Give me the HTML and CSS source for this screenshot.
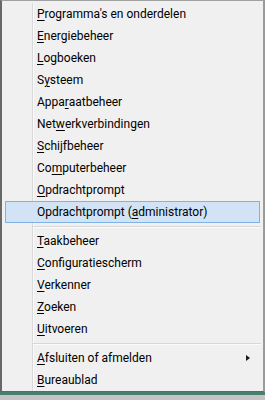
FILE: index.html
```html
<!DOCTYPE html>
<html lang="nl">
<head>
    <meta charset="UTF-8">
    <meta name="viewport" content="width=device-width, initial-scale=1.0">
    <title>Win+X menu</title>
    <link rel="stylesheet" href="styles.css">
</head>
<body>

    <!-- Context menu -->
    <div class="menu">
        <ul class="items">
            <li class="item"><u>P</u>rogramma's en onderdelen</li>
            <li class="item"><u>E</u>nergiebeheer</li>
            <li class="item"><u>L</u>ogboeken</li>
            <li class="item">S<u>y</u>steem</li>
            <li class="item">Appa<u>r</u>aatbeheer</li>
            <li class="item">Net<u>w</u>erkverbindingen</li>
            <li class="item"><u>S</u>chijfbeheer</li>
            <li class="item">Co<u>m</u>puterbeheer</li>
            <li class="item"><u>O</u>pdrachtprompt</li>
            <li class="item active">Opdrachtprompt (<u>a</u>dministrator)</li>
            <li class="sep"></li>
            <li class="item"><u>T</u>aakbeheer</li>
            <li class="item"><u>C</u>onfiguratiescherm</li>
            <li class="item"><u>V</u>erkenner</li>
            <li class="item"><u>Z</u>oeken</li>
            <li class="item"><u>U</u>itvoeren</li>
            <li class="sep"></li>
            <li class="item has-sub"><u>A</u>fsluiten of afmelden<span class="arrow"></span></li>
            <li class="item"><u>B</u>ureaublad</li>
        </ul>
    </div>

    <!-- Desktop behind the menu -->
    <div class="desk"></div>

</body>
</html>
```

FILE: styles.css
```css
/* Page */
html, body {
    margin: 0;
    padding: 0;
    height: 100%;
    overflow: hidden;
    background: linear-gradient(#8f8f8f, #c4c4c4);
    font-family: Roboto, "Noto Sans", sans-serif;
    font-size: 12px;
    color: #000;
}

/* Menu box */
.menu {
    width: 265px;
    box-sizing: border-box;
    background-color: #f0f0f0;
    border-top: 1px solid #a0a0a0;
    border-left: 2px solid #686868;
    border-right: 2px solid #9b9b9b;
    border-bottom: 1px solid #4c7268;
    padding-top: 2px;
}

.items {
    list-style: none;
    margin: 0;
    padding: 0;
    /* gutter line next to the icon column */
    background: linear-gradient(to right,
        transparent 30px, #d9d9d9 30px, #d9d9d9 31px,
        #fbfbfb 31px, #fbfbfb 32px, transparent 32px);
}

/* Rows */
.item {
    position: relative;
    height: 20px;
    line-height: 20px;
    margin: 0 3px;
    padding-left: 31px;
    border: 1px solid transparent;
    white-space: nowrap;
}

.item u {
    text-decoration: underline;
    text-underline-offset: 2px;
}

.item.active {
    background-color: #d1e3f5;
    border-color: #7fb3e6;
}

/* Separators */
.sep {
    height: 7px;
    margin: 0 2px 0 31px;
    background: linear-gradient(transparent 3px, #d7d7d7 3px, #d7d7d7 4px,
        #fbfbfb 4px, #fbfbfb 5px, transparent 5px);
}

/* Submenu arrow */
.arrow {
    position: absolute;
    right: 9px;
    top: 7px;
    width: 0;
    height: 0;
    border-top: 3.5px solid transparent;
    border-bottom: 3.5px solid transparent;
    border-left: 4px solid #1a1a1a;
}

/* Strip of the window behind */
.desk {
    height: 3px;
    background-color: #4a7e71;
}
```
